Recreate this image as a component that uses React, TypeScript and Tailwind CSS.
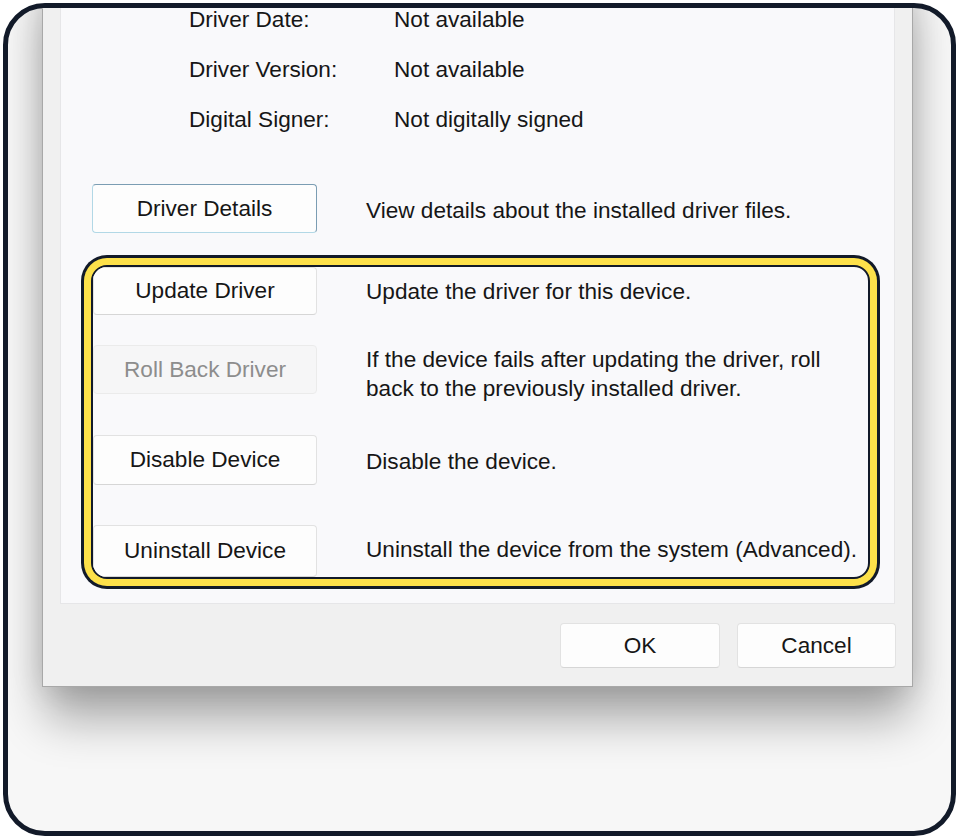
const font = { fontFamily: '"Liberation Sans", Arial, sans-serif' };

type ActionRow = {
  label: string;
  lines: string[];
  disabled?: boolean;
  rowClass: string;
  btnClass: string;
  descClass: string;
};

const actions: ActionRow[] = [
  {
    label: "Update Driver",
    lines: ["Update the driver for this device."],
    rowClass: "",
    btnClass: "h-[48px]",
    descClass: "mt-[10px] leading-[30px]",
  },
  {
    label: "Roll Back Driver",
    lines: [
      "If the device fails after updating the driver, roll",
      "back to the previously installed driver.",
    ],
    disabled: true,
    rowClass: "mt-[30px]",
    btnClass: "h-[49px]",
    descClass: "leading-[29px]",
  },
  {
    label: "Disable Device",
    lines: ["Disable the device."],
    rowClass: "mt-[32px]",
    btnClass: "h-[50px]",
    descClass: "mt-[12px] leading-[30px]",
  },
  {
    label: "Uninstall Device",
    lines: ["Uninstall the device from the system (Advanced)."],
    rowClass: "mt-[40px]",
    btnClass: "h-[52px]",
    descClass: "mt-[10px] leading-[30px]",
  },
];

function DialogButton({
  children,
  disabled,
  className = "",
}: {
  children: React.ReactNode;
  disabled?: boolean;
  className?: string;
}) {
  return (
    <button
      className={
        "shrink-0 flex items-center justify-center rounded-[4px] border text-[22.6px] " +
        (disabled
          ? "bg-[#f6f6f7] border-[#ebebeb] text-[#8d8d8d] "
          : "bg-[#fdfdfd] border-[#e2e2e2] border-b-[#d6d6d6] text-[#161616] ") +
        className
      }
    >
      {children}
    </button>
  );
}

export default function App() {
  return (
    <div className="w-[960px] h-[840px] bg-white pl-[3px] pt-[3px]" style={font}>
      {/* rounded frame */}
      <div className="w-[953px] h-[833px] border-[5px] border-[#121a29] rounded-[42px] overflow-hidden bg-[#f7f7f7]">
        {/* properties dialog, top cut off by the frame */}
        <div className="ml-[34px] mt-[-40px] w-[871px] bg-[#f0f0f0] border-x border-b border-[#a8a8a8] shadow-[0_36px_44px_-4px_rgba(0,0,0,0.32),0_0_30px_rgba(0,0,0,0.14)]">
          {/* driver tab page */}
          <div className="mx-[17px] h-[636px] bg-[#f9f9fb] border-x border-b border-[#e6e6e8] pt-[37px] text-[22.6px] text-[#161616]">
            <div className="pl-[128px] grid grid-cols-[205px_auto] gap-y-[20px] leading-[30px]">
              <span>Driver Date:</span>
              <span>Not available</span>
              <span>Driver Version:</span>
              <span>Not available</span>
              <span>Digital Signer:</span>
              <span>Not digitally signed</span>
            </div>

            <div className="mt-[49px] ml-[31px] flex items-start">
              <DialogButton className="w-[225px] h-[49px] !border-[#7b9db3] !border-l-[#b2d8e6] !border-b-[#b2d8e6]">
                Driver Details
              </DialogButton>
              <span className="ml-[49px] mt-[12px] leading-[30px]">
                View details about the installed driver files.
              </span>
            </div>

            {/* highlighted actions */}
            <div className="mt-[22px] ml-[20px] w-[799px] rounded-[26px] bg-[#121a29] p-[3px]">
              <div className="rounded-[23px] bg-[#fde14a] p-[7px]">
                <div className="h-[314px] rounded-[16px] border-2 border-[#121a29] bg-[#f9f9fb] overflow-hidden">
                  {actions.map((a) => (
                    <div key={a.label} className={"flex items-start " + a.rowClass}>
                      <DialogButton disabled={a.disabled} className={"w-[224px] " + a.btnClass}>
                        {a.label}
                      </DialogButton>
                      <div className={"ml-[49px] " + a.descClass}>
                        {a.lines.map((l) => (
                          <div key={l}>{l}</div>
                        ))}
                      </div>
                    </div>
                  ))}
                </div>
              </div>
            </div>
          </div>

          {/* footer */}
          <div className="flex justify-end gap-[17px] pt-[19px] pb-[18px] pr-[16px]">
            <DialogButton className="w-[160px] h-[45px]">OK</DialogButton>
            <DialogButton className="w-[159px] h-[45px]">Cancel</DialogButton>
          </div>
        </div>
      </div>
    </div>
  );
}
